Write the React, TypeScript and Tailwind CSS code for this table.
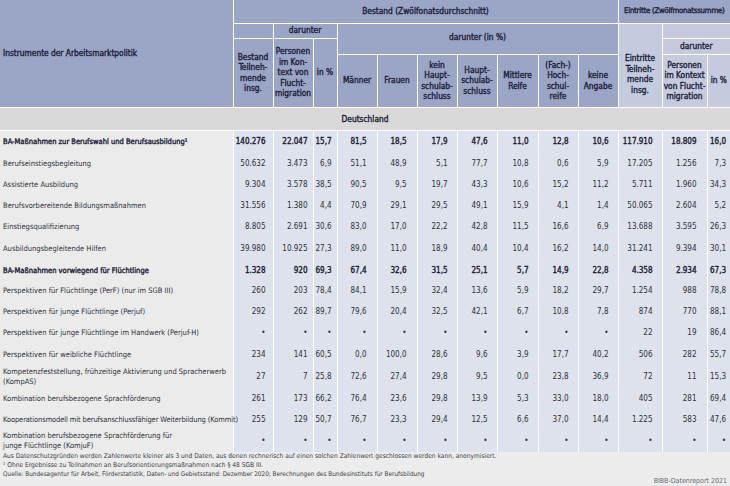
import React from "react";

type Row = {
  label: React.ReactNode;
  bold?: boolean;
  h: string;
  tight?: boolean;
  v: string[];
};

const D = "•";

const rows: Row[] = [
  {
    label: "BA-Maßnahmen zur Berufswahl und Berufsausbildung¹",
    bold: true,
    h: "h-[23px]",
    v: ["140.276", "22.047", "15,7", "81,5", "18,5", "17,9", "47,6", "11,0", "12,8", "10,6", "117.910", "18.809", "16,0"],
  },
  {
    label: "Berufseinstiegsbegleitung",
    h: "h-[21px]",
    v: ["50.632", "3.473", "6,9", "51,1", "48,9", "5,1", "77,7", "10,8", "0,6", "5,9", "17.205", "1.256", "7,3"],
  },
  {
    label: "Assistierte Ausbildung",
    h: "h-[21px]",
    v: ["9.304", "3.578", "38,5", "90,5", "9,5", "19,7", "43,3", "10,6", "15,2", "11,2", "5.711", "1.960", "34,3"],
  },
  {
    label: "Berufsvorbereitende Bildungsmaßnahmen",
    h: "h-[21px]",
    v: ["31.556", "1.380", "4,4", "70,9", "29,1", "29,5", "49,1", "15,9", "4,1", "1,4", "50.065", "2.604", "5,2"],
  },
  {
    label: "Einstiegsqualifizierung",
    h: "h-[22px]",
    v: ["8.805", "2.691", "30,6", "83,0", "17,0", "22,2", "42,8", "11,5", "16,6", "6,9", "13.688", "3.595", "26,3"],
  },
  {
    label: "Ausbildungsbegleitende Hilfen",
    h: "h-[22px]",
    v: ["39.980", "10.925", "27,3", "89,0", "11,0", "18,9", "40,4", "10,4", "16,2", "14,0", "31.241", "9.394", "30,1"],
  },
  {
    label: "BA-Maßnahmen vorwiegend für Flüchtlinge",
    bold: true,
    h: "h-[21px]",
    v: ["1.328", "920", "69,3", "67,4", "32,6", "31,5", "25,1", "5,7", "14,9", "22,8", "4.358", "2.934", "67,3"],
  },
  {
    label: "Perspektiven für Flüchtlinge (PerF) (nur im SGB III)",
    h: "h-[20px]",
    v: ["260", "203", "78,4", "84,1", "15,9", "32,4", "13,6", "5,9", "18,2", "29,7", "1.254", "988", "78,8"],
  },
  {
    label: "Perspektiven für junge Flüchtlinge (Perjuf)",
    h: "h-[21px]",
    v: ["292", "262", "89,7", "79,6", "20,4", "32,5", "42,1", "6,7", "10,8", "7,8", "874", "770", "88,1"],
  },
  {
    label: "Perspektiven für junge Flüchtlinge im Handwerk (Perjuf-H)",
    h: "h-[22px]",
    v: [D, D, D, D, D, D, D, D, D, D, "22", "19", "86,4"],
  },
  {
    label: "Perspektiven für weibliche Flüchtlinge",
    h: "h-[22px]",
    v: ["234", "141", "60,5", "0,0", "100,0", "28,6", "9,6", "3,9", "17,7", "40,2", "506", "282", "55,7"],
  },
  {
    label: (
      <>
        Kompetenzfeststellung, frühzeitige Aktivierung und Spracherwerb
        <br />
        (KompAS)
      </>
    ),
    h: "h-[22px]",
    v: ["27", "7", "25,8", "72,6", "27,4", "29,8", "9,5", "0,0", "23,8", "36,9", "72", "11", "15,3"],
  },
  {
    label: "Kombination berufsbezogene Sprachförderung",
    h: "h-[21px]",
    v: ["261", "173", "66,2", "76,4", "23,6", "29,8", "13,9", "5,3", "33,0", "18,0", "405", "281", "69,4"],
  },
  {
    label: "Kooperationsmodell mit berufsanschlussfähiger Weiterbildung (Kommit)",
    h: "h-[21px]",
    tight: true,
    v: ["255", "129", "50,7", "76,7", "23,3", "29,4", "12,5", "6,6", "37,0", "14,4", "1.225", "583", "47,6"],
  },
  {
    label: (
      <>
        Kombination berufsbezogene Sprachförderung für
        <br />
        junge Flüchtlinge (KomjuF)
      </>
    ),
    h: "h-[22px]",
    v: [D, D, D, D, D, D, D, D, D, D, D, D, D],
  },
];

// right padding per data column, read off the reference
const padR = [
  "pr-[7px]",
  "pr-[5px]",
  "pr-[5px]",
  "pr-[10px]",
  "pr-[10px]",
  "pr-[9px]",
  "pr-[9px]",
  "pr-[9px]",
  "pr-[9px]",
  "pr-[9px]",
  "pr-[9px]",
  "pr-[10px]",
  "pr-[4px]",
];

const colW = [233, 40, 40, 24, 40, 40, 40, 40, 41, 40, 40, 44, 45, 23];

// the narrow bold face is missing, so bold is drawn with a thin stroke on the condensed regular
const fb = "font-normal [-webkit-text-stroke:0.35px]";
const hd = `bg-[#9ba5c5] border border-white text-center align-middle ${fb}`;
const hdLight = `bg-[#c5cbde] border border-white text-center align-middle ${fb}`;

export default function App() {
  return (
    <div
      className="w-[730px] h-[486px] overflow-hidden bg-[#ececec] text-[#2c303a]"
      style={{ fontFamily: '"DejaVu Sans Condensed", "Liberation Sans", sans-serif' }}
    >
      <table className="w-[730px] table-fixed border-collapse text-[8px] leading-[10px]">
        <colgroup>
          {colW.map((w, i) => (
            <col key={i} style={{ width: w }} />
          ))}
        </colgroup>
        <thead className="text-[#1b2038] text-[8.3px] leading-[10.5px]">
          <tr className="h-[23px]">
            <th rowSpan={4} className={`bg-[#9ba5c5] border border-white border-l-0 border-t-0 text-left pl-[3px] ${fb}`}>
              Instrumente der Arbeitsmarktpolitik
            </th>
            <th colSpan={10} className={`${hd} border-t-0 whitespace-nowrap`}>
              Bestand (Zwölfonatsdurchschnitt)
            </th>
            <th
              colSpan={3}
              className={`${hd} border-t-0 border-r-0 whitespace-nowrap text-[7.8px] tracking-[-0.25px]`}
            >
              Eintritte (Zwölfmonatssumme)
            </th>
          </tr>
          <tr className="h-[15px]">
            <th className={hd}></th>
            <th colSpan={2} className={hd}>
              darunter
            </th>
            <th colSpan={7} rowSpan={2} className={`${hd} align-bottom pb-[2px]`}>
              darunter (in %)
            </th>
            <th rowSpan={3} className={`${hdLight} pt-[18px]`}>
              Eintritte
              <br />
              Teilneh-
              <br />
              mende
              <br />
              insg.
            </th>
            <th colSpan={2} className={`${hdLight} border-r-0`}></th>
          </tr>
          <tr className="h-[16px]">
            <th rowSpan={2} className={hd}>
              Bestand
              <br />
              Teilneh-
              <br />
              mende
              <br />
              insg.
            </th>
            <th rowSpan={2} className={hd}>
              Personen
              <br />
              im Kon-
              <br />
              text von
              <br />
              Flucht-
              <br />
              migration
            </th>
            <th rowSpan={2} className={hd}>
              in %
            </th>
            <th colSpan={2} className={`${hdLight} border-r-0`}>
              darunter
            </th>
          </tr>
          <tr className="h-[53px]">
            <th className={hd}>Männer</th>
            <th className={hd}>Frauen</th>
            <th className={hd}>
              kein
              <br />
              Haupt-
              <br />
              schulab-
              <br />
              schluss
            </th>
            <th className={hd}>
              Haupt-
              <br />
              schulab-
              <br />
              schluss
            </th>
            <th className={hd}>
              Mittlere
              <br />
              Reife
            </th>
            <th className={hd}>
              (Fach-)
              <br />
              Hoch-
              <br />
              schul-
              <br />
              reife
            </th>
            <th className={hd}>
              keine
              <br />
              Angabe
            </th>
            <th className={hdLight}>
              Personen
              <br />
              im Kontext
              <br />
              von Flucht-
              <br />
              migration
            </th>
            <th className={`${hdLight} border-r-0`}>in %</th>
          </tr>
        </thead>
        <tbody>
          <tr className="h-[23px]">
            <td colSpan={14} className={`bg-[#d9d9d9] border-y border-white text-center text-[8.3px] text-[#1b2038] ${fb}`}>
              Deutschland
            </td>
          </tr>
          {rows.map((r, i) => (
            <tr key={i} className={`${r.h} ${r.bold ? `${fb} text-[#1b2038]` : ""}`}>
              <td
                className={`bg-[#ebebeb] pl-[3px] align-middle border-r border-white text-[7.5px] whitespace-nowrap ${
                  r.tight ? "tracking-[-0.12px]" : ""
                }`}
              >
                {r.label}
              </td>
              {r.v.map((v, j) => (
                <td
                  key={j}
                  className={`bg-[#dee2ec] text-right align-middle border-r border-white ${padR[j]} ${
                    j === 12 ? "border-r-0" : ""
                  }`}
                >
                  {v}
                </td>
              ))}
            </tr>
          ))}
        </tbody>
      </table>
      <div className="pl-[3px] text-[6.6px] leading-[9px] text-[#3a3d45]">
        <p>
          Aus Datenschutzgründen werden Zahlenwerte kleiner als 3 und Daten, aus denen rechnerisch auf einen solchen
          Zahlenwert geschlossen werden kann, anonymisiert.
        </p>
        <p>¹ Ohne Ergebnisse zu Teilnahmen an Berufsorientierungsmaßnahmen nach § 48 SGB III.</p>
        <p className="text-[6.4px]">
          Quelle: Bundesagentur für Arbeit, Förderstatistik, Daten- und Gebietsstand: Dezember 2020; Berechnungen des
          Bundesinstituts für Berufsbildung
        </p>
        <p className="text-right pr-[3px] text-[7px] text-[#6a6d75] -mt-[2px]">BIBB-Datenreport 2021</p>
      </div>
    </div>
  );
}
